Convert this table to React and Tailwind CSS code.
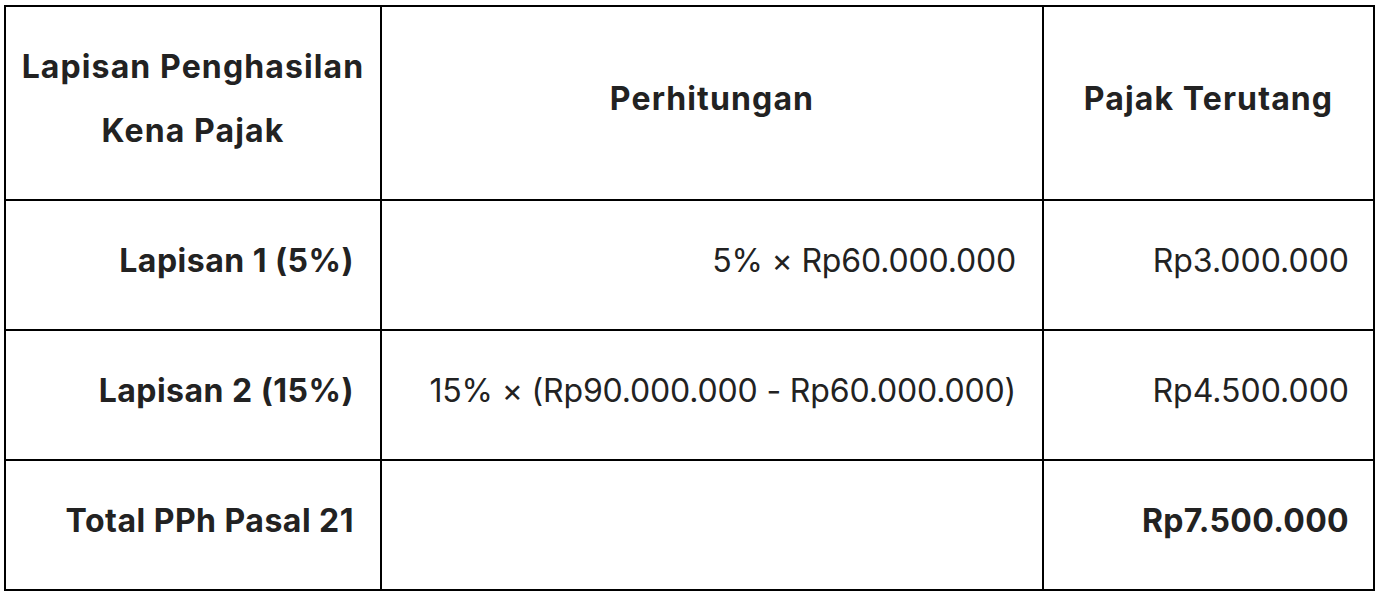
const rows = [
  { label: 'Lapisan 1 (5%)', calc: '5% × Rp60.000.000', tax: 'Rp3.000.000' },
  { label: 'Lapisan 2 (15%)', calc: '15% × (Rp90.000.000 - Rp60.000.000)', tax: 'Rp4.500.000' },
  { label: 'Total PPh Pasal 21', calc: '', tax: 'Rp7.500.000', total: true },
]

export default function App() {
  return (
    <div className="min-h-screen bg-white pl-[4px] pt-[5px] text-[#222] font-['Inter','Noto_Sans',sans-serif]">
      <table className="w-[1369px] table-fixed border-collapse border-2 border-black text-[32px]">
        <colgroup>
          <col className="w-[376px]" />
          <col className="w-[662px]" />
          <col className="w-[331px]" />
        </colgroup>
        <thead>
          <tr className="h-[194px]">
            <th className="border-2 border-black px-[8px] pb-[8px] text-center font-bold leading-[64px] tracking-[0.035em]">Lapisan Penghasilan Kena Pajak</th>
            <th className="border-2 border-black px-[26px] pb-[8px] text-center font-bold leading-[64px] tracking-[0.035em]">Perhitungan</th>
            <th className="border-2 border-black px-[20px] pb-[8px] text-center font-bold leading-[64px] tracking-[0.035em]">Pajak Terutang</th>
          </tr>
        </thead>
        <tbody>
          {rows.map(r => (
            <tr key={r.label} className="h-[130px]">
              <td className="border-2 border-black pr-[26px] pb-[8px] text-right font-bold tracking-[0.015em]">{r.label}</td>
              <td className="border-2 border-black pr-[26px] pb-[8px] text-right tracking-[-0.005em]">{r.calc}</td>
              <td className={`border-2 border-black pr-[24px] pb-[8px] text-right ${r.total ? 'font-bold tracking-[0.01em]' : ''}`}>{r.tax}</td>
            </tr>
          ))}
        </tbody>
      </table>
    </div>
  )
}
